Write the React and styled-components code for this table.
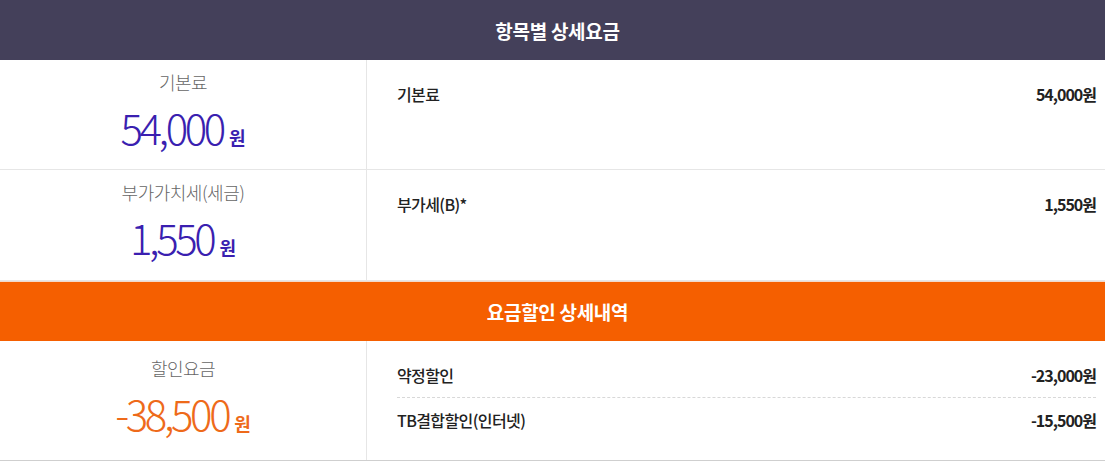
import React from 'react';
import styled, { createGlobalStyle } from 'styled-components';

const GlobalStyle = createGlobalStyle`
  body {
    margin: 0;
    background: #fff;
    font-family: "Noto Sans CJK KR", "Noto Sans", sans-serif;
  }
`;

const Wrap = styled.div`
  width: 1105px;
`;

const SectionTitle = styled.div`
  height: 60px;
  display: flex;
  align-items: center;
  justify-content: center;
  padding-left: 10px;
  box-sizing: border-box;
  background: ${(p) => p.bg};
  color: #fff;
  font-size: 19px;
  font-weight: 700;
  letter-spacing: -0.3px;
  border-top: ${(p) => (p.gap ? '1px solid #f3d9c8' : 'none')};
`;

const Row = styled.div`
  display: grid;
  grid-template-columns: 367px 1fr;
  height: ${(p) => p.h}px;
  border-bottom: 1px solid ${(p) => (p.last ? '#cfcfcf' : '#e6e6e6')};
  box-sizing: border-box;
`;

const Summary = styled.div`
  border-right: 1px solid #e6e6e6;
  display: flex;
  flex-direction: column;
  align-items: center;
  padding-top: ${(p) => p.top}px;
`;

const SummaryLabel = styled.div`
  font-size: 18px;
  font-weight: 300;
  color: #666;
  letter-spacing: -0.5px;
  line-height: 26px;
`;

const Amount = styled.div`
  display: flex;
  align-items: baseline;
  margin-top: 7px;
  color: ${(p) => p.color};
`;

const AmountNum = styled.span`
  font-size: 42px;
  font-weight: 300;
  letter-spacing: -3.4px;
  line-height: 50px;
`;

const Won = styled.span`
  font-size: 18px;
  font-weight: 700;
  margin-left: 6px;
`;

const Details = styled.div`
  padding: 21px 9px 0 30px;
`;

const Item = styled.div`
  display: flex;
  justify-content: space-between;
  align-items: center;
  height: ${(p) => p.h || 26}px;
  font-size: 16px;
  font-weight: 500;
  color: #222;
  letter-spacing: -0.6px;
  & + & {
    border-top: 1px dashed #d8d8d8;
  }
`;

const Price = styled.span`
  font-weight: 700;
  letter-spacing: -1px;
`;

const DetailList = styled.div`
  padding: 12px 9px 0 30px;
  display: flex;
  flex-direction: column;
`;

const Box = ({ label, amount, color, top }) => (
  <Summary top={top}>
    <SummaryLabel>{label}</SummaryLabel>
    <Amount color={color}>
      <AmountNum>{amount}</AmountNum>
      <Won>원</Won>
    </Amount>
  </Summary>
);

const App = () => (
  <Wrap>
    <GlobalStyle />
    <SectionTitle bg="#44405a">항목별 상세요금</SectionTitle>
    <Row h={110}>
      <Box label="기본료" amount="54,000" color="#3a1fb0" top={9} />
      <Details>
        <Item>
          <span>기본료</span>
          <Price>54,000원</Price>
        </Item>
      </Details>
    </Row>
    <Row h={111}>
      <Box label="부가가치세(세금)" amount="1,550" color="#3a1fb0" top={9} />
      <Details>
        <Item>
          <span>부가세(B)*</span>
          <Price>1,550원</Price>
        </Item>
      </Details>
    </Row>
    <SectionTitle bg="#f55f00" gap>요금할인 상세내역</SectionTitle>
    <Row h={120} last>
      <Box label="할인요금" amount="-38,500" color="#ee6a1a" top={14} />
      <DetailList>
        <Item h={44}>
          <span>약정할인</span>
          <Price>-23,000원</Price>
        </Item>
        <Item h={44}>
          <span>TB결합할인(인터넷)</span>
          <Price>-15,500원</Price>
        </Item>
      </DetailList>
    </Row>
  </Wrap>
);

export default App;
